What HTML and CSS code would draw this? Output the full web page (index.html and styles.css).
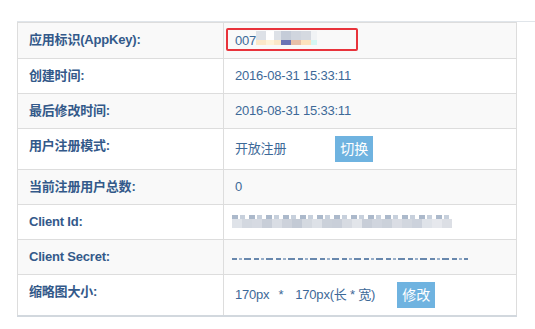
FILE: index.html
```html
<!DOCTYPE html>
<html lang="zh-CN">
<head>
<meta charset="utf-8">
<title>应用信息</title>
<link rel="stylesheet" href="styles.css">
</head>
<body>
<div class="panel">
  <table class="info">
    <colgroup><col class="c-name"><col class="c-value"></colgroup>
    <tbody>
      <tr>
        <th>应用标识(AppKey):</th>
        <td class="key-cell">007<span class="mosaic-key"></span><span class="mark"></span></td>
      </tr>
      <tr>
        <th>创建时间:</th>
        <td>2016-08-31 15:33:11</td>
      </tr>
      <tr>
        <th>最后修改时间:</th>
        <td>2016-08-31 15:33:11</td>
      </tr>
      <tr>
        <th>用户注册模式:</th>
        <td class="with-btn"><div class="line"><span>开放注册</span><button class="btn btn-switch">切换</button></div></td>
      </tr>
      <tr>
        <th>当前注册用户总数:</th>
        <td>0</td>
      </tr>
      <tr>
        <th>Client Id:</th>
        <td><span class="mosaic-id"></span></td>
      </tr>
      <tr>
        <th>Client Secret:</th>
        <td><span class="mosaic-secret"></span></td>
      </tr>
      <tr>
        <th>缩略图大小:</th>
        <td class="with-btn"><div class="line"><span>170px</span><span class="star">*</span><span class="size2">170px(长 * 宽)</span><button class="btn btn-edit">修改</button></div></td>
      </tr>
    </tbody>
  </table>
</div>
</body>
</html>
```

FILE: styles.css
```css
html, body {
  margin: 0;
  padding: 0;
  background: #fff;
}

body {
  font-family: "Liberation Sans", Arial, "Noto Sans CJK SC", sans-serif;
  font-size: 13px;
  color: #336699;
}

.panel {
  margin: 21px 0 0 17px;
  border-top: 1px solid #e0e5ea;
}

.info {
  width: 500px;
  border-collapse: collapse;
  border: 1px solid #dddddd;
  border-bottom: 2px solid #d2d8de;
  table-layout: fixed;
}

.c-name { width: 206px; }

.info th,
.info td {
  border: 1px solid #dddddd;
  padding: 8px 11px;
  line-height: 18px;
  height: 18px;
  text-align: left;
  vertical-align: top;
  white-space: nowrap;
}

.info th {
  font-weight: bold;
  color: #33598a;
  letter-spacing: -0.2px;
}

.info td {
  color: #3d6998;
  letter-spacing: -0.2px;
}

.info tr:nth-child(odd) th,
.info tr:nth-child(odd) td {
  background: #f9f9f9;
}

.info td.with-btn {
  padding-top: 7px;
  padding-bottom: 7px;
  height: 26px;
}

.line {
  display: flex;
  align-items: center;
  height: 26px;
}

.btn {
  border: 0;
  margin: 0;
  padding: 0 5px;
  height: 26px;
  line-height: 26px;
  background: #6fb3e0;
  color: #fff;
  font-family: "Liberation Sans", Arial, "Noto Sans CJK SC", sans-serif;
  font-size: 14px;
  letter-spacing: 0;
}

.btn-switch { margin-left: 49px; }
.btn-edit { margin-left: 22px; }

.star { margin-left: 9px; }
.size2 { margin-left: 12px; }

.key-cell {
  position: relative;
}

.mark {
  position: absolute;
  left: 2px;
  top: 5px;
  width: 128px;
  height: 19px;
  border: 2px solid #e8333b;
  border-radius: 2px;
}

.mosaic-key {
  display: inline-block;
  width: 61px;
  height: 14px;
  vertical-align: 0;
  background:
    linear-gradient(90deg, #dde1e7 0 10px, #fff 10px 18px, #dde1e7 18px 25px, #c5ccd8 25px 35px, #d0d5de 35px 45px, #d5d9e0 45px 55px, #f1f3f5 55px 61px) top / 100% 9px no-repeat,
    linear-gradient(90deg, #fbe8c8 0 10px, #fff3d8 10px 18px, #fbe8c8 18px 25px, #6b73b5 25px 35px, #e8bfa8 35px 45px, #fde3bd 45px 55px, #d5f7f3 55px 61px) bottom / 100% 5px no-repeat;
}

.mosaic-id {
  display: block;
  width: 220px;
  height: 13px;
  margin: 2px 0 0 -3px;
  background:
    repeating-linear-gradient(90deg, rgba(70,100,140,0.45) 0 6px, transparent 6px 8px, rgba(70,100,140,0.3) 8px 13px, transparent 13px 17px) top / 100% 4px no-repeat,
    linear-gradient(90deg,
      #dfe3e9 0 10px, #d3d8e0 10px 20px, #d6dae2 20px 30px, #c8ced8 30px 40px,
      #d9dde4 40px 50px, #cdd2db 50px 60px, #c3cad5 60px 70px, #d4d9e0 70px 80px,
      #dde1e7 80px 90px, #cbd1da 90px 100px, #c9cfd9 100px 110px, #d7dbe2 110px 120px,
      #e2e5ea 120px 130px, #c8ced8 130px 140px, #d0d5de 140px 150px, #cbd1da 150px 160px,
      #dadde4 160px 170px, #d2d7df 170px 180px, #ccd2dc 180px 190px, #dfe3e9 190px 200px,
      #e6e8ed 200px 210px, #dcdfe5 210px 220px) bottom / 100% 9px no-repeat;
}

.mosaic-secret {
  display: block;
  width: 236px;
  height: 2px;
  margin: 10px 0 0 -3px;
  background: repeating-linear-gradient(90deg, rgba(79,116,160,0.85) 0 5px, transparent 5px 7px, rgba(111,143,181,0.7) 7px 10px, transparent 10px 12px, rgba(79,116,160,0.85) 12px 19px, transparent 19px 22px);
}
```
